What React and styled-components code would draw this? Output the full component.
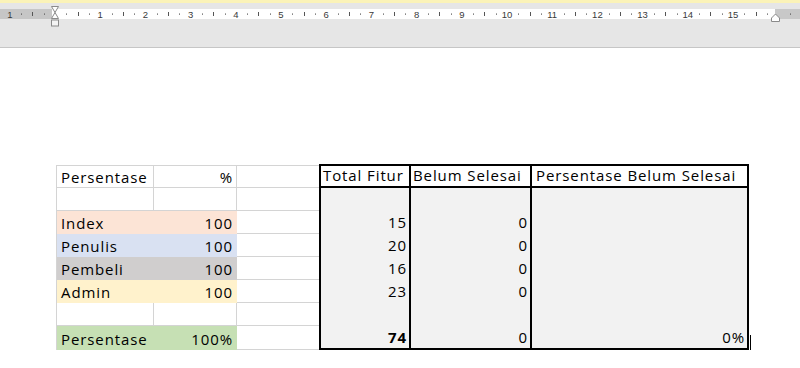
import React from "react";
import styled, { createGlobalStyle } from "styled-components";

const GlobalStyle = createGlobalStyle`
  html, body { margin: 0; padding: 0; background: #ffffff; }
  body { font-family: "Open Sans", "Noto Sans", sans-serif; color: #000; }
`;

const Page = styled.div`
  width: 800px;
  height: 368px;
  overflow: hidden;
  display: flex;
  flex-direction: column;
`;

const Strip = styled.div`
  height: 3px;
  background: #fbf3b8;
`;

const RulerBar = styled.div`
  height: 44px;
  background: #e6e6e6;
  border-bottom: 1px solid #c6c6c6;
  svg { display: block; }
`;

const Doc = styled.div`
  flex: 1;
  background: #ffffff;
  padding: 117px 0 0 56px;
`;

const Sheet = styled.div`
  display: flex;
  align-items: flex-start;
`;

const LeftGrid = styled.div`
  display: grid;
  grid-template-columns: 97px 83px 82px;
  grid-template-rows: 22px repeat(6, 23px) 24px;
  border-top: 1px solid #d4d4d4;
  border-left: 1px solid #d4d4d4;
`;

const Cell = styled.div`
  box-sizing: border-box;
  display: flex;
  align-items: flex-end;
  justify-content: ${(p) => (p.$right ? "flex-end" : "flex-start")};
  padding: 0 3px 1px 4px;
  font-size: 15px;
  line-height: 18px;
  letter-spacing: 0.9px;
  white-space: nowrap;
  background: ${(p) => p.$fill || "transparent"};
  border-bottom: 1px solid ${(p) => p.$fill || "#d4d4d4"};
  border-right: ${(p) => (p.$last ? "none" : `1px solid ${p.$fill || "#d4d4d4"}`)};
`;

const RightBlock = styled.div`
  margin-top: -1px;
  display: grid;
  grid-template-columns: 90px 121px 215px;
  grid-template-rows: 22px 22px repeat(6, 23px);
  border: 2px solid #000;
  background: #f2f2f2;
`;

const HeadCell = styled.div`
  box-sizing: border-box;
  display: flex;
  align-items: flex-end;
  padding: 0 2px 2px ${(p) => (p.$wide ? "4px" : "2px")};
  font-size: 15px;
  line-height: 18px;
  letter-spacing: 0.9px;
  white-space: nowrap;
  background: #ffffff;
  border-bottom: 2px solid #000;
  border-right: ${(p) => (p.$last ? "none" : "2px solid #000")};
`;

const ValCell = styled.div`
  box-sizing: border-box;
  display: flex;
  align-items: flex-end;
  justify-content: flex-end;
  padding: 0 2px 2px 2px;
  font-size: 15px;
  line-height: 18px;
  letter-spacing: 0.9px;
  font-weight: ${(p) => (p.$bold ? 700 : 400)};
  white-space: nowrap;
  border-right: ${(p) => (p.$last ? "none" : "2px solid #000")};
`;

const Caret = styled.div`
  align-self: flex-end;
  width: 1px;
  height: 15px;
  margin-left: 1px;
  background: #000;
`;

const CM = 45.2;
const ZERO = 55;

function Ruler() {
  const marks = [];
  for (let k = -4; k <= 65; k++) {
    const x = ZERO + (k * CM) / 4;
    if (k === 0 || k === 64) continue;
    if (k % 4 === 0) {
      marks.push(
        <text
          key={k}
          x={x}
          y={14.5}
          textAnchor="middle"
          fontSize="9.5"
          fontFamily="'Liberation Sans', Arial, sans-serif"
          fill="#3a3a3a"
        >
          {Math.abs(k / 4)}
        </text>
      );
    } else if (Math.abs(k % 4) === 2) {
      marks.push(<rect key={k} x={Math.round(x)} y={9} width={1} height={4} fill="#555" />);
    } else {
      marks.push(<rect key={k} x={Math.round(x)} y={10.5} width={1} height={1.2} fill="#555" />);
    }
  }
  return (
    <svg width="800" height="44" viewBox="0 0 800 44">
      <rect x="0" y="6" width="52" height="10" fill="#c6c6c6" />
      <rect x="52" y="6" width="723" height="10" fill="#ffffff" />
      <rect x="775" y="6" width="25" height="10" fill="#c8c8c8" />
      {marks}
      <path
        d="M51.5 3.5 H58.5 L55 9.5 L58.5 15.5 H51.5 L55 9.5 Z"
        fill="#ffffff"
        stroke="#8a8a8a"
        strokeWidth="1"
      />
      <rect x="51.5" y="17" width="7" height="6" fill="#f4f4f4" stroke="#8a8a8a" strokeWidth="1" />
      <path
        d="M771.5 18.5 V15 L775.5 11 L779.5 15 V18.5 Z"
        fill="#ffffff"
        stroke="#8a8a8a"
        strokeWidth="1"
      />
    </svg>
  );
}

const leftRows = [
  { a: "Persentase", b: "%" },
  { a: "", b: "" },
  { a: "Index", b: "100", fill: "#fce4d6" },
  { a: "Penulis", b: "100", fill: "#d9e1f2" },
  { a: "Pembeli", b: "100", fill: "#d0cece" },
  { a: "Admin", b: "100", fill: "#fff2cc" },
  { a: "", b: "" },
  { a: "Persentase", b: "100%", fill: "#c6e0b4" },
];

const rightRows = [
  ["", "", ""],
  ["15", "0", ""],
  ["20", "0", ""],
  ["16", "0", ""],
  ["23", "0", ""],
  ["", "", ""],
  ["74", "0", "0%"],
];

export default function App() {
  return (
    <Page>
      <GlobalStyle />
      <Strip />
      <RulerBar>
        <Ruler />
      </RulerBar>
      <Doc>
        <Sheet>
          <LeftGrid>
            {leftRows.map((r, i) => (
              <React.Fragment key={i}>
                <Cell $fill={r.fill}>{r.a}</Cell>
                <Cell $fill={r.fill} $right>
                  {r.b}
                </Cell>
                <Cell $last />
              </React.Fragment>
            ))}
          </LeftGrid>
          <RightBlock>
            <HeadCell>Total Fitur</HeadCell>
            <HeadCell>Belum Selesai</HeadCell>
            <HeadCell $last $wide>
              Persentase Belum Selesai
            </HeadCell>
            {rightRows.map((r, i) => (
              <React.Fragment key={i}>
                <ValCell $bold={i === rightRows.length - 1}>{r[0]}</ValCell>
                <ValCell>{r[1]}</ValCell>
                <ValCell $last>{r[2]}</ValCell>
              </React.Fragment>
            ))}
          </RightBlock>
          <Caret />
        </Sheet>
      </Doc>
    </Page>
  );
}
